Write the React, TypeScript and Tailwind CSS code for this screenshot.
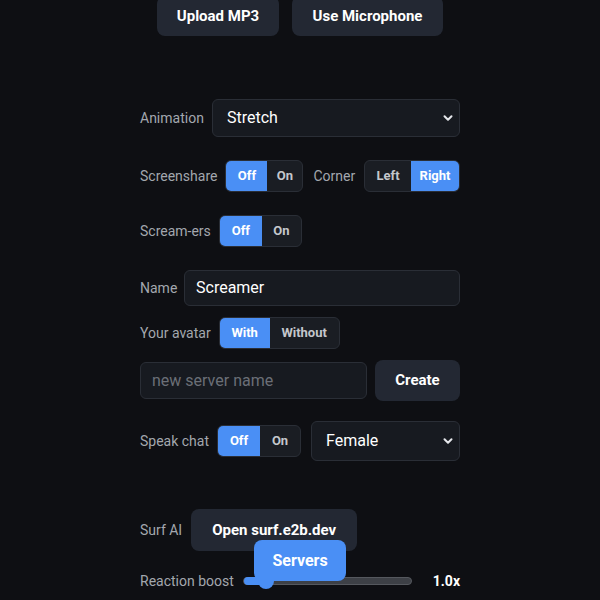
import React from "react";

const font = { fontFamily: "Roboto, 'Noto Sans', sans-serif" };

function Toggle({ options, active, widths }: { options: string[]; active: number; widths: number[] }) {
  return (
    <div className="flex h-[32px] rounded-[6px] border border-[#2a2e36] overflow-hidden bg-[#1a1d23]">
      {options.map((o, i) => (
        <div
          key={o}
          style={{ width: widths[i] }}
          className={
            "flex items-center justify-center text-[13px] font-bold " +
            (i === active ? "bg-[#4a8ff5] text-white" : "text-[#c4c7cc]")
          }
        >
          {o}
        </div>
      ))}
    </div>
  );
}

function Select({ value, w, h }: { value: string; w: number; h: number }) {
  return (
    <div
      style={{ width: w, height: h }}
      className="relative flex items-center rounded-[6px] border border-[#2a2e36] bg-[#171a20] pl-[14px] text-[16px] text-white"
    >
      <span>{value}</span>
      <svg className="absolute right-[6px] top-1/2 -translate-y-1/2" width="10" height="10" viewBox="0 0 10 10">
        <path d="M1.5 3.2 L5 6.7 L8.5 3.2" stroke="#e5e7eb" strokeWidth="2" fill="none" strokeLinecap="round" strokeLinejoin="round" />
      </svg>
    </div>
  );
}

const label = "text-[14px] text-[#a3a7ae]";

export default function App() {
  return (
    <div style={font} className="min-h-screen bg-[#0e0f13] text-white overflow-hidden">
      <div className="w-[320px] mx-auto">
        <div className="flex justify-center gap-[13px] -mt-[4px]">
          <div className="w-[122px] h-[40px] rounded-[8px] bg-[#232833] flex items-center justify-center text-[15px] font-bold">
            Upload MP3
          </div>
          <div className="w-[151px] h-[40px] rounded-[8px] bg-[#232833] flex items-center justify-center text-[15px] font-bold">
            Use Microphone
          </div>
        </div>

        <div className="mt-[63px] flex items-center justify-between">
          <span className={label}>Animation</span>
          <Select value="Stretch" w={248} h={38} />
        </div>

        <div className="mt-[23px] flex items-center">
          <span className={label}>Screenshare</span>
          <div className="ml-[8px]">
            <Toggle options={["Off", "On"]} active={0} widths={[41, 35]} />
          </div>
          <span className={label + " ml-[10px]"}>Corner</span>
          <div className="ml-auto">
            <Toggle options={["Left", "Right"]} active={1} widths={[46, 48]} />
          </div>
        </div>

        <div className="mt-[23px] flex items-center">
          <span className={label}>Scream-ers</span>
          <div className="ml-[8px]">
            <Toggle options={["Off", "On"]} active={0} widths={[42, 39]} />
          </div>
        </div>

        <div className="mt-[23px] flex items-center justify-between">
          <span className={label}>Name</span>
          <div className="w-[276px] h-[36px] flex items-center rounded-[6px] border border-[#2a2e36] bg-[#171a20] pl-[11px] text-[16px] text-white">
            Screamer
          </div>
        </div>

        <div className="mt-[11px] flex items-center">
          <span className={label}>Your avatar</span>
          <div className="ml-[8px]">
            <Toggle options={["With", "Without"]} active={0} widths={[50, 69]} />
          </div>
        </div>

        <div className="mt-[11px] flex items-center justify-between">
          <div className="w-[227px] h-[37px] flex items-center rounded-[6px] border border-[#2a2e36] bg-[#171a20] pl-[11px] text-[16px] text-[#6b6f77]">
            new server name
          </div>
          <div className="w-[85px] h-[41px] rounded-[8px] bg-[#232833] flex items-center justify-center text-[15px] font-bold">
            Create
          </div>
        </div>

        <div className="mt-[20px] flex items-center">
          <span className={label}>Speak chat</span>
          <div className="ml-[8px]">
            <Toggle options={["Off", "On"]} active={0} widths={[42, 40]} />
          </div>
          <div className="ml-auto">
            <Select value="Female" w={149} h={40} />
          </div>
        </div>

        <div className="mt-[48px] flex items-center">
          <span className={label}>Surf AI</span>
          <div className="ml-[9px] w-[166px] h-[42px] rounded-[8px] bg-[#232833] flex items-center justify-center text-[15px] font-bold">
            Open surf.e2b.dev
          </div>
        </div>

        <div className="mt-[19px] flex items-center h-[22px]">
          <span className={label}>Reaction boost</span>
          <div className="ml-[9px] relative w-[169px] h-[8px] rounded-full bg-[#3d4046] border border-[#55585e]">
            <div className="absolute left-0 top-[-1px] h-[8px] w-[22px] rounded-full bg-[#4a8ff5]" />
            <div className="absolute left-[14px] top-1/2 -translate-y-1/2 w-[16px] h-[16px] rounded-full bg-[#4a8ff5]" />
          </div>
          <span className="ml-auto text-[14px] font-bold text-white">1.0x</span>
        </div>
      </div>

      <div className="fixed left-1/2 -translate-x-1/2 bottom-[19px] w-[92px] h-[41px] rounded-[8px] bg-[#4a8ff5] flex items-center justify-center text-[16px] font-bold text-white">
        Servers
      </div>
    </div>
  );
}
